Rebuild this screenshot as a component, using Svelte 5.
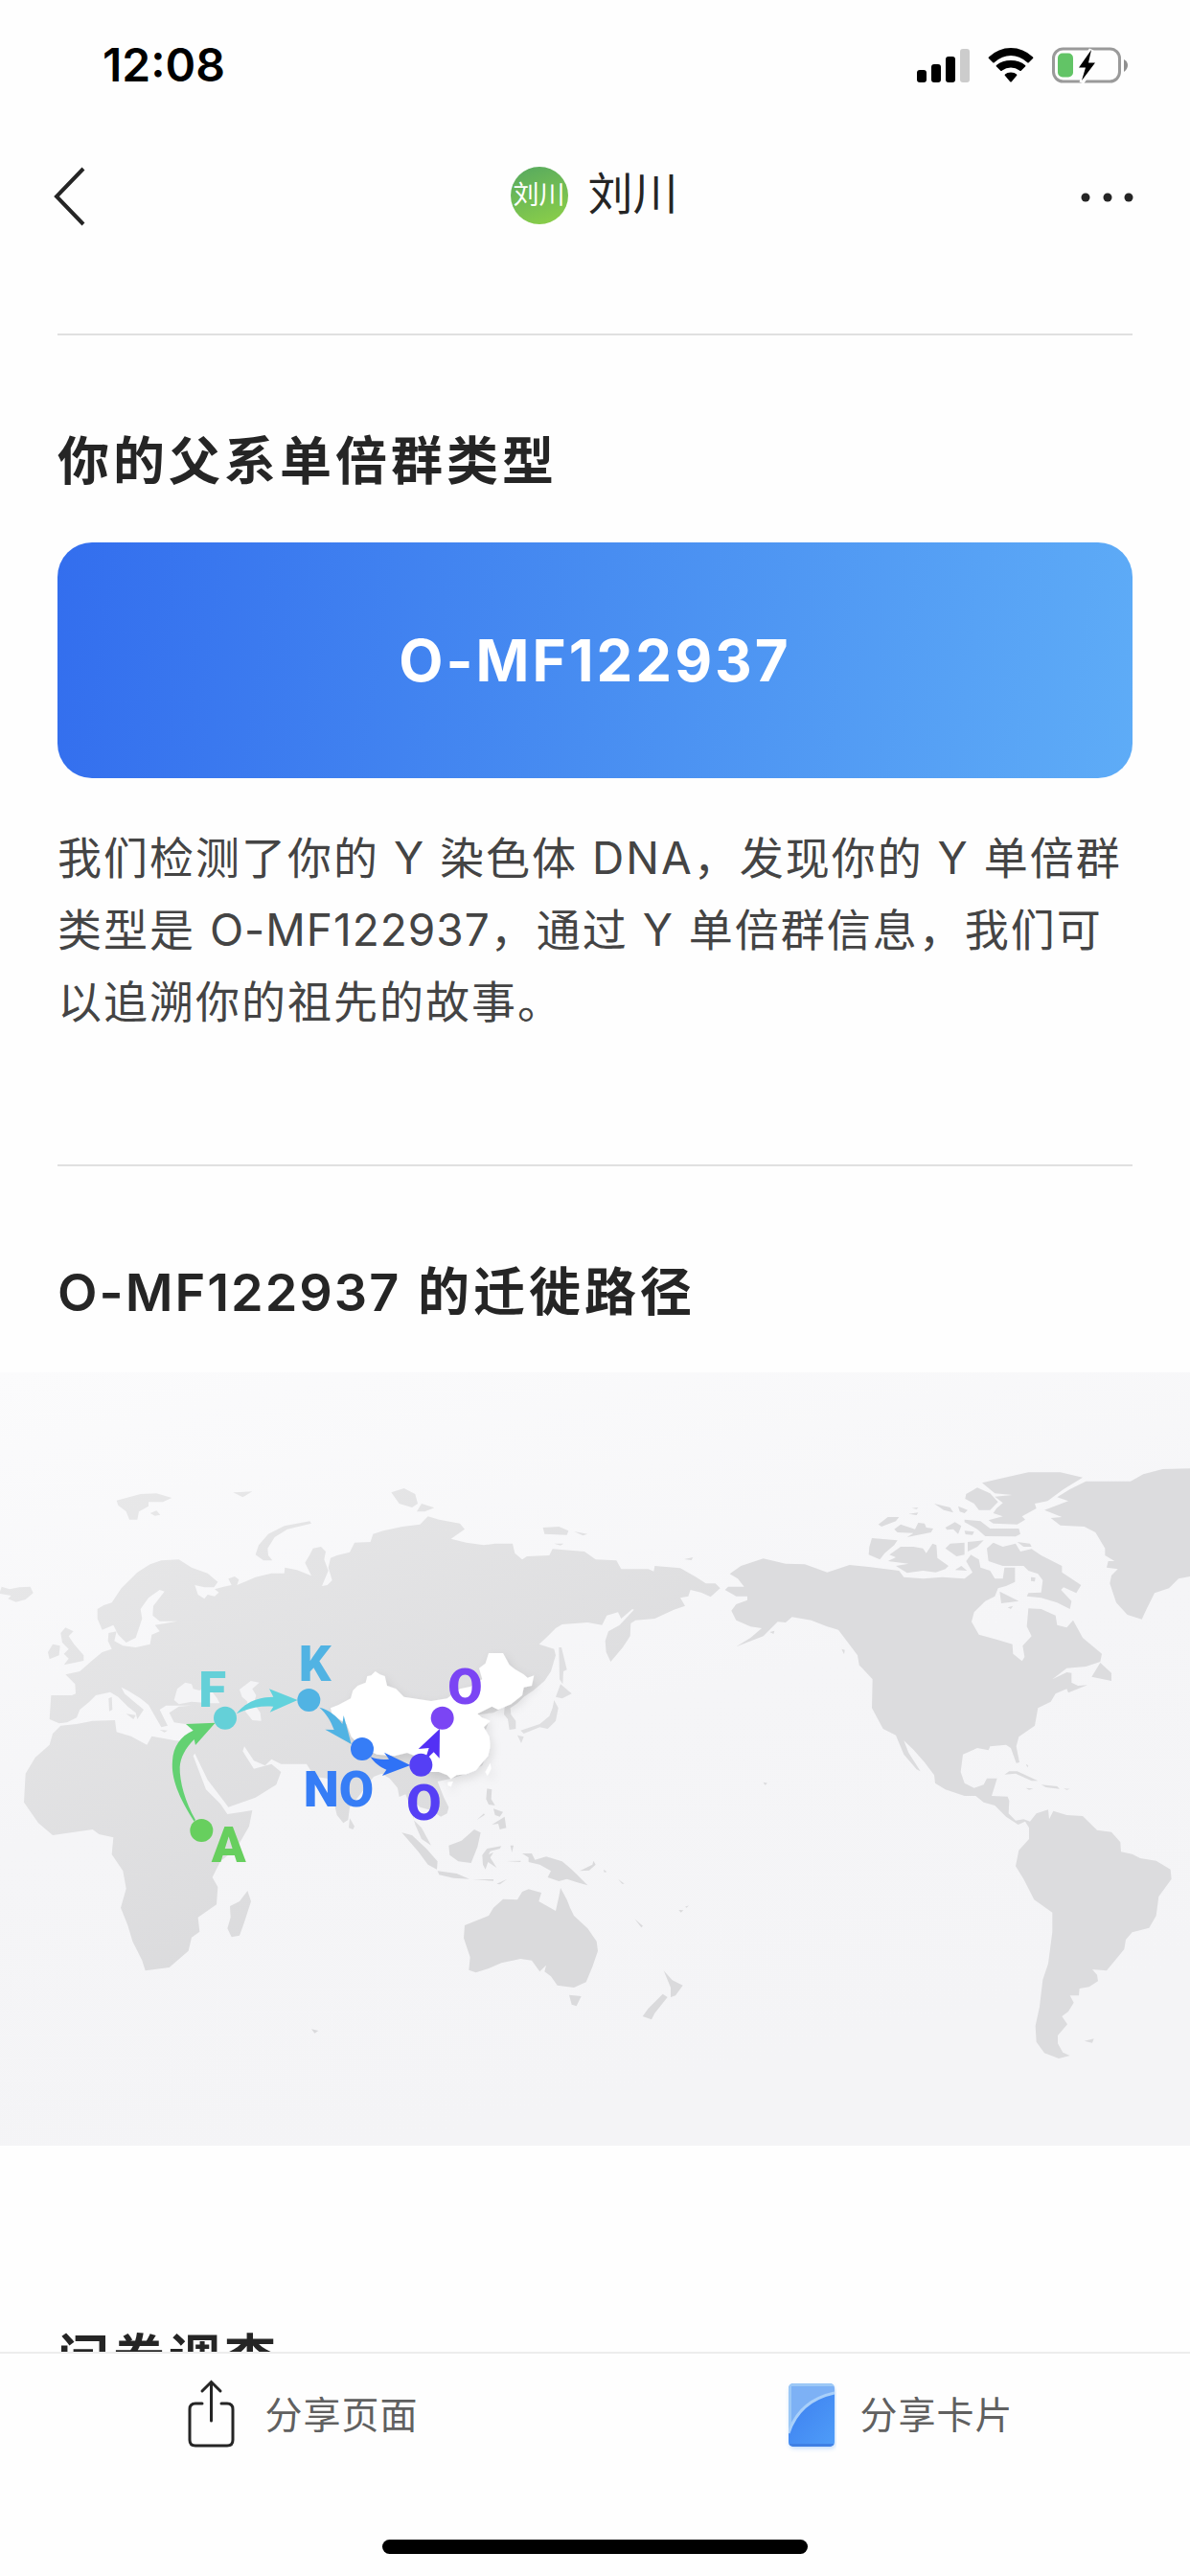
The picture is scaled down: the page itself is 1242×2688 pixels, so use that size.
<script lang="ts">
  const haplogroup = 'O-MF122937';

  const signalBars = [
    { x: 0, y: 22, on: true },
    { x: 15, y: 16, on: true },
    { x: 30, y: 8, on: true },
    { x: 45, y: 0, on: false },
  ];

  const stops = [
    { name: 'A', color: '#67cf5e', cx: 631, cy: 1473, tx: 662, ty: 1573 },
    { name: 'F', color: '#64d0d8', cx: 705, cy: 1121, tx: 622, ty: 1087 },
    { name: 'K', color: '#51b3e3', cx: 967, cy: 1065, tx: 935, ty: 1004 },
    { name: 'NO', color: '#367df6', cx: 1134, cy: 1218, tx: 950, ty: 1398 },
    { name: 'O', color: '#553ff5', cx: 1318, cy: 1268, tx: 1273, ty: 1441 },
    { name: 'O', color: '#7b45f4', cx: 1385, cy: 1121, tx: 1402, ty: 1078 },
  ];

  const arrows = [
    { color: '#63d172', d: 'M608 1445C560 1370 535 1310 540 1255C542 1210 565 1178 605 1160L582 1140L674 1136L612 1206L608 1188C580 1215 565 1245 563 1275C562 1320 580 1385 612 1440Z' },
    { color: '#62d2dc', d: 'M740 1108C770 1070 810 1055 856 1055L843 1030L932 1065L845 1103L856 1085C810 1082 780 1090 740 1108Z' },
    { color: '#51b3e3', d: 'M1000 1088C1030 1095 1055 1115 1072 1140L1076 1113L1100 1203L1018 1157L1046 1158C1036 1130 1020 1105 1000 1088Z' },
    { color: '#2f72f6', d: 'M1160 1243C1180 1250 1195 1252 1218 1250L1203 1229L1285 1269L1197 1302L1210 1283C1190 1275 1170 1260 1160 1243Z' },
    { color: '#5330f5', d: 'M1377 1155L1376 1247L1358 1228L1340 1245L1335 1240L1343 1215L1310 1218Z' },
  ];
</script>

<div class="app">
  <header>
    <div class="status">
      <time>12:08</time>
      <div class="indicators">
        <svg width="55" height="37" viewBox="0 0 55 37" aria-hidden="true">
          {#each signalBars as bar}
            <rect x={bar.x} y={bar.y + 1} width="10" height={35 - bar.y} rx="3" fill={bar.on ? '#000' : '#ccc'} />
          {/each}
        </svg>
        <svg width="48" height="37" viewBox="0 0 48 37" aria-hidden="true">
          <path d="M1 11Q0 10 1 9.500Q11 0 24 0T47 9.500Q48 10 47 11L43 15Q42 16 41 15Q33 8 24 8T7 15Q6 16 5 15Z" />
          <path d="M9 19.500Q8 19 9 18Q15 13 24 13T39 18Q40 19 39 19.500L35 23.500Q34 24.500 33 23.500Q29 20.500 24 20.500T15 23.500Q14 24.500 13 23.500Z" />
          <path d="M18 29Q17 28 18 27.500Q20 25.500 24 25.500T30 27.500Q31 28 30 29L25 35Q24 36 23 35Z" />
        </svg>
        <svg width="80" height="39" viewBox="0 0 80 39" aria-hidden="true">
          <rect x="1.500" y="2" width="69" height="34" rx="10" fill="none" stroke="#9a9a9a" stroke-width="3" />
          <path d="M75 13Q79 15 79 19T75 26Z" fill="#8f8f8f" />
          <rect x="6" y="6.500" width="16" height="25" rx="5" fill="#62c466" />
          <path d="M41 3L28 21.500H35L31 37L45 16.500H38L41 3Z" stroke="#fff" stroke-width="5" />
          <path d="M41 3L28 21.500H35L31 35L45 16.500H38L41 3Z" />
        </svg>
      </div>
    </div>
    <nav>
      <button class="back" aria-label="返回">
        <svg width="34" height="64" viewBox="0 0 34 64" aria-hidden="true">
          <path d="M31 4L3 33L31 62" fill="none" stroke="#252525" stroke-width="4" />
        </svg>
      </button>
      <div class="profile">
        <span class="avatar">刘川</span>
        <span class="name">刘川</span>
      </div>
      <button class="more" aria-label="更多">
        <svg width="56" height="16" viewBox="0 0 56 16" aria-hidden="true">
          <circle cx="5" cy="10" r="4.500" /><circle cx="28" cy="10" r="4.500" /><circle cx="50" cy="10" r="4.500" />
        </svg>
      </button>
    </nav>
  </header>

  <main>
    <section>
      <h2>你的父系单倍群类型</h2>
      <div class="badge">{haplogroup}</div>
      <p>我们检测了你的 Y 染色体 DNA，发现你的 Y 单倍群类型是 <span class="code">{haplogroup}</span>，通过 Y 单倍群信息，我们可以追溯你的祖先的故事。</p>
    </section>
    <section class="route">
      <h2><span class="code">{haplogroup}</span> 的迁徙路径</h2>
    </section>
    <svg class="map" viewBox="0 39 3726 2421" role="img" aria-label="迁徙路径地图">
      <defs>
        <linearGradient id="sea" x1="0" y1="0" x2="0.350" y2="1">
          <stop offset="0" stop-color="#fbfbfc" /><stop offset="0.550" stop-color="#f5f5f7" /><stop offset="1" stop-color="#f4f4f6" />
        </linearGradient>
        <linearGradient id="land" gradientUnits="userSpaceOnUse" x1="300" y1="400" x2="1000" y2="1900">
          <stop offset="0" stop-color="#e8e8e9" /><stop offset="1" stop-color="#dadadc" />
        </linearGradient>
        <filter id="shade" x="-10%" y="-10%" width="125%" height="130%">
          <feDropShadow dx="8" dy="14" stdDeviation="14" flood-color="#000" flood-opacity="0.1" />
        </filter>
      </defs>
      <rect y="39" width="3726" height="2421" fill="url(#sea)" />

      <g fill="url(#land)">
        <path d="M305 780L325 768L350 760L380 715L430 665L470 640L505 628L560 625L600 650L650 668L682 695L670 712L640 712L610 705L620 735L640 748L650 735L672 740L685 728L672 718L700 710L725 705L715 685L735 678L748 688L742 705L800 680L850 668L890 668L892 650L930 658L975 676L955 635L970 610L980 590L1005 585L1020 600L1015 625L1028 660L1008 708L1025 705L1040 690L1028 650L1035 620L1055 612L1095 602L1110 572L1160 570L1168 545L1200 535L1260 522L1315 515L1340 490L1375 500L1440 512L1455 530L1412 560L1460 572L1515 580L1550 575L1605 575L1612 605L1635 625L1650 615L1720 612L1730 592L1830 600L1865 625L1930 628L1945 655L2030 655L2047 662L2050 645L2130 652L2180 680L2210 700L2240 700L2255 715L2225 742L2195 728L2162 720L2155 740L2130 745L2145 770L2110 782L2050 810L1990 815L1975 825L1973 865L1950 900L1912 945L1898 915L1895 880L1905 850L1940 830L1985 782L1980 780L1945 810L1935 790L1900 800L1885 830L1840 822L1760 828L1740 840L1710 870L1688 890L1735 905L1740 925L1725 975L1705 1005L1670 1035L1640 1055L1620 1075L1598 1090L1600 1110L1615 1130L1615 1155L1595 1158L1590 1125L1578 1110L1580 1085L1545 1105L1500 1110L1530 1135L1520 1160L1535 1210L1510 1270L1460 1295L1415 1310L1370 1320L1390 1370L1405 1400L1400 1420L1380 1430L1350 1410L1315 1400L1300 1385L1295 1440L1320 1465L1350 1520L1320 1500L1300 1455L1285 1400L1270 1360L1250 1368L1245 1340L1220 1310L1195 1295L1170 1305L1120 1370L1095 1400L1090 1440L1075 1450L1055 1425L1035 1340L1025 1310L985 1305L960 1265L880 1265L850 1250L830 1270L795 1255L765 1210L760 1225L795 1280L850 1265L880 1290L865 1330L800 1370L715 1400L700 1380L650 1315L610 1232L605 1240L645 1345L690 1390L712 1422L790 1410L780 1460L740 1530L690 1570L665 1620L682 1650L678 1705L620 1745L625 1790L600 1808L590 1850L530 1902L455 1912L445 1880L415 1820L400 1770L378 1715L395 1655L385 1600L350 1548L355 1495L310 1485L290 1470L165 1488L120 1450L75 1385L80 1295L110 1245L155 1205L165 1170L190 1145L240 1140L290 1130L360 1128L365 1165L410 1178L460 1205L475 1178L550 1192L600 1195L622 1160L600 1143L545 1135L530 1105L560 1085L600 1082L520 1082L500 1095L525 1145L505 1150L485 1115L465 1080L440 1060L400 1035L380 1025L390 1045L420 1070L450 1095L440 1110L430 1125L425 1105L400 1085L370 1055L345 1040L300 1050L280 1070L250 1095L240 1120L210 1135L185 1138L155 1125L160 1050L225 1050L237 1045L235 1015L205 985L250 975L290 940L320 915L350 905L338 880L340 855L365 850L358 880L385 895L425 900L470 890L475 860L500 850L485 830L555 818L500 818L478 800L480 770L515 725L500 720L465 745L440 780L445 810L425 870L395 885L370 860L355 830L320 845L305 810Z" />
        <path d="M365 440L440 420L490 418L538 432L510 445L465 445L465 458L435 475L430 500L405 500L395 475L370 455ZM470 480L490 472L502 485L485 488ZM730 415L790 412L760 430ZM800 610L810 580L840 545L890 520L970 505L975 512L900 530L860 555L838 590L840 612L853 628L825 628ZM1225 415L1265 402L1300 420L1308 450L1290 462L1250 450ZM1320 450L1360 463L1330 475L1305 475ZM1700 525L1750 522L1780 535L1775 548L1705 545ZM1797 537L1840 545L1825 550ZM1735 575L1765 575L1755 581ZM2142 624L2170 618L2165 627Z" />
        <path d="M0 725L5 710L30 718L60 712L95 710L104 730L80 750L50 758L25 748L35 738L0 732ZM190 855L205 838L230 850L215 865L232 890L262 925L262 942L200 955L215 935L200 920L215 905L195 885ZM150 915L165 890L188 895L185 925L155 937ZM340 1060L350 1055L352 1095L342 1100ZM395 1108L425 1112L418 1125ZM500 1158L525 1160L515 1166Z" />
        <path d="M720 1710L750 1695L775 1662L786 1695L765 1760L750 1802L725 1807L712 1780L722 1745ZM1095 1435L1110 1460L1105 1470L1092 1465ZM975 2095L997 2100L985 2108Z" />
      </g>
      <g fill="#dfdfe1">
        <path d="M1750 900L1758 900L1775 970L1764 975L1762 1015L1752 1000ZM1755 1015L1790 1045L1760 1060L1740 1055ZM1735 1065L1748 1090L1740 1130L1715 1155L1690 1150L1640 1170L1630 1160L1690 1140L1720 1115L1730 1090ZM1620 1175L1640 1180L1632 1200Z" />
      </g>
      <g fill="#dadadc" transform="translate(1200 1080)">
        <path d="M325 262L340 265L338 295L350 315L330 312L322 295ZM345 325L375 335L365 350L350 345ZM340 375L380 350L385 385L365 390L360 372ZM293 360L315 340L318 344ZM58 400L90 408L135 450L170 490L168 515L140 500L110 460ZM170 520L230 528L270 545L220 542L175 532ZM205 440L245 425L285 390L305 400L295 445L275 495L235 490L208 470ZM310 470L325 450L370 442L365 450L335 458L330 468L345 462L335 478L355 510L328 492L320 515L312 500ZM280 547L345 546L345 551ZM355 560L388 545L365 562ZM398 440L408 440L403 462ZM385 489L430 488L430 492Z" />
        <path d="M435 465L465 465L475 485L510 475L560 490L590 515L610 535L640 565L605 555L575 545L550 552L515 540L525 520L490 500L455 492L455 478ZM615 520L655 500L658 488L665 500L645 518ZM690 515L700 523L692 524ZM735 545L755 560L748 560Z" />
        <path d="M255 690L330 660L345 635L375 608L420 610L435 585L455 577L495 588L487 615L540 645L550 600L555 573L575 610L585 635L597 660L640 700L668 740L672 770L655 820L635 868L597 885L545 878L525 850L505 835L510 815L490 835L465 800L430 795L370 808L330 825L290 838L268 830L272 790L252 730ZM582 908L620 912L605 943L590 938ZM878 832L905 862L938 878L915 910L900 915L900 885ZM875 905L890 915L850 965L840 985L812 975L830 950ZM787 670L813 692L808 697ZM925 642L940 643L932 650ZM945 632L957 628L950 635ZM1190 242L1203 245L1195 251Z" />
      </g>
      <g fill="#dcdcde" transform="translate(2460 180)">
        <path d="M0 458L-70 442L-140 465L-175 490L-150 505L-130 530L-180 530L-190 540L-155 560L-120 560L-120 572L-155 585L-170 605L-155 635L-110 655L-75 660L-110 690L-155 718L-70 685L-25 640L0 642L20 625L80 635L130 655L165 665L225 745L230 775L272 820L270 910L305 975L345 995L370 1055L410 1102L422 1108L385 1050L370 1012L400 1040L435 1080L465 1120L468 1145L500 1165L560 1185L595 1185L620 1205L655 1215L690 1250L728 1275L750 1265L762 1285L762 1320L730 1355L720 1405L745 1445L778 1510L835 1550L835 1610L822 1710L805 1760L795 1845L782 1905L785 1955L810 1990L855 2007L890 1998L868 1988L852 1960L852 1935L882 1900L865 1875L885 1860L902 1832L890 1810L918 1810L920 1788L950 1783L978 1765L975 1745L960 1728L1005 1732L1060 1665L1065 1635L1085 1612L1138 1598L1160 1560L1168 1500L1208 1445L1205 1415L1160 1388L1110 1380L1085 1367L1050 1360L1048 1330L1020 1298L975 1292L930 1248L880 1245L838 1232L825 1258L822 1228L785 1240L765 1265L745 1258L720 1262L698 1240L700 1200L695 1187L645 1185L662 1130L630 1130L620 1150L590 1160L560 1145L548 1110L555 1055L600 1035L635 1042L640 1030L690 1025L705 1035L722 1082L732 1080L722 1030L730 1000L780 965L790 910L830 890L845 865L880 850L885 862L945 838L915 840L895 830L895 800L880 798L835 820L880 785L940 780L985 765L990 740L930 690L900 635L880 658L850 650L845 620L800 600L760 598L755 655L770 685L742 715L748 750L740 763L712 740L710 710L660 695L605 680L582 640L590 610L625 575L655 560L665 535L690 528L718 515L718 470L685 470L680 505L655 505L640 480L610 470L605 445L580 430L565 450L585 485L560 505L490 500L430 505L370 500L355 480L260 468L200 462L130 485L60 460Z" />
        <path d="M810 290L885 262L850 250L890 225L940 200L1080 200L1120 178L1180 162L1266 160L1266 498L1230 505L1200 535L1155 550L1130 600L1115 632L1070 618L1035 580L1015 520L1020 495L1040 475L1005 470L1010 450L1030 450L1000 432L1000 410L970 360L935 342L860 338L830 315L865 312Z" />
        <path d="M615 205L700 185L760 172L860 172L930 188L870 225L820 262L780 270L785 285L740 310L750 320L725 335L650 332L635 322L680 310L650 300L660 285L680 268L655 248L710 243L655 238ZM565 240L600 220L640 238L665 265L640 290L605 290L590 270L562 255ZM560 320L610 325L640 348L730 348L735 365L720 373L625 372L600 350L560 328ZM465 270L515 282L525 298L495 290ZM540 278L570 290L560 300L545 295ZM290 335L320 312L355 312L345 325L300 342ZM340 350L360 335L405 350L415 330L435 332L440 345L462 348L455 360L380 375L400 362L350 360ZM500 345L530 328L550 340L540 365L525 350L505 352ZM385 302L415 298L410 306ZM560 355L590 358L585 368L563 366ZM395 284L415 282L410 287Z" />
        <path d="M270 378L350 385L340 400L310 425L295 445L260 430L262 405ZM325 430L360 405L400 405L430 410L440 425L460 395L472 400L475 440L510 465L500 475L470 485L430 480L380 487L345 465L385 458L320 450L345 438ZM500 410L515 395L560 392L560 430L535 435ZM570 390L620 385L600 405L570 420ZM630 410L650 392L680 405L720 395L735 420L770 412L800 432L865 465L865 485L925 525L910 550L870 532L862 540L895 575L890 600L850 580L800 565L755 560L760 550L800 548L805 510L790 490L760 480L745 465L680 465L635 450ZM725 390L765 395L770 405L745 405ZM670 545L730 575L675 582ZM768 500L782 502L780 514L768 512ZM530 478L550 465L568 480ZM695 595L712 590L705 600Z" />
        <path d="M985 768L1020 800L1020 825L958 812ZM685 1118L700 1108L725 1108L790 1138L770 1138L720 1115ZM800 1150L850 1155L858 1163L815 1158ZM752 1160L775 1162L762 1166ZM870 1162L890 1163L880 1166ZM935 1952L965 1945L960 1958ZM228 773L275 800L283 815L265 805ZM175 725L185 728L183 742ZM-50 672L-35 668L-38 678ZM752 1085L760 1090L757 1096Z" />
      </g>
      <path fill="#f4f4f6" d="M545 1065L555 1030L580 1010L600 1015L605 1030L625 1035L650 1020L680 1060L688 1075L655 1075L600 1070L560 1078ZM750 1032L785 1005L812 1010L790 1030L802 1050L795 1075L815 1105L818 1130L790 1128L768 1100L775 1070L758 1055Z" />

      <g fill="#fff" filter="url(#shade)">
        <path d="M1035 1090L1060 1080L1098 1060L1105 1035L1120 1020L1145 1010L1150 990L1162 988L1175 975L1190 985L1205 990L1212 1020L1240 1030L1265 1055L1350 1068L1400 1060L1440 1030L1475 1022L1510 1000L1500 965L1520 950L1530 918L1575 918L1595 955L1612 968L1640 985L1652 995L1672 988L1665 1020L1640 1025L1635 1050L1600 1078L1560 1095L1540 1085L1495 1108L1510 1120L1535 1130L1515 1150L1532 1180L1535 1210L1528 1240L1490 1285L1460 1297L1430 1300L1412 1312L1400 1300L1375 1290L1340 1290L1320 1255L1300 1240L1275 1230L1235 1240L1180 1235L1130 1210L1100 1180L1085 1140L1040 1110ZM1403 1322L1418 1320L1412 1336L1402 1332ZM1520 1290L1535 1262L1538 1280L1526 1302Z" />
      </g>

      {#each arrows as arrow}
        <path d={arrow.d} fill={arrow.color} />
      {/each}
      {#each stops as stop}
        <circle cx={stop.cx} cy={stop.cy} r="36" fill={stop.color} />
        <text x={stop.tx} y={stop.ty} fill={stop.color}>{stop.name}</text>
      {/each}
    </svg>
    <section class="survey">
      <h2>问卷调查</h2>
    </section>
  </main>

  <footer>
    <div class="actions">
      <button>
        <svg width="68" height="80" viewBox="0 0 68 80" fill="none" stroke="#252525" stroke-width="3" stroke-linecap="round" aria-hidden="true">
          <path d="M27 29H20Q14 29 14 35V67Q14 73 20 73H53Q59 73 59 67V35Q59 29 53 29H47" />
          <path d="M36.500 47V7M27 16L36.500 6.500L46 16" />
        </svg>
        <span>分享页面</span>
      </button>
      <button>
        <svg width="68" height="80" viewBox="0 0 68 80" aria-hidden="true">
          <defs>
            <linearGradient id="card" x1="0" y1="0" x2="1" y2="1">
              <stop offset="0" stop-color="#3d7ff0" /><stop offset="1" stop-color="#4f9df8" />
            </linearGradient>
            <clipPath id="cardShape"><rect x="18" y="8" width="48" height="66" rx="5" /></clipPath>
            <filter id="cardShade" x="-20%" y="-20%" width="150%" height="150%">
              <feDropShadow dx="1" dy="3" stdDeviation="2" flood-color="#4f9df8" flood-opacity="0.350" />
            </filter>
          </defs>
          <rect x="18" y="8" width="48" height="65" rx="5" fill="#7db1f5" filter="url(#cardShade)" />
          <g clip-path="url(#cardShape)">
            <path d="M18 8H66V11H21V74H18Z" fill="#9cc8f6" />
            <path d="M18 60Q29 26 66 18V74H18Z" fill="url(#card)" />
            <path d="M18 60Q29 26 66 18" fill="none" stroke="#a9d0fa" stroke-width="3" />
            <rect x="18" y="71" width="48" height="3" fill="#3f80e4" />
          </g>
        </svg>
        <span>分享卡片</span>
      </button>
    </div>
    <div class="home"></div>
  </footer>
</div>

<style>
  :global(body) {
    margin: 0;
    background: #fdfdfd;
  }
  .app {
    display: flex;
    flex-direction: column;
    height: 100vh;
    background: #fefefe;
    color: #252525;
    font-family: Inter, 'Noto Sans CJK SC', sans-serif;
  }
  button {
    padding: 0;
    border: 0;
    background: none;
    color: inherit;
    font: inherit;
  }
  svg {
    display: block;
    flex: none;
  }
  .status {
    display: flex;
    justify-content: space-between;
    align-items: center;
    height: 132px;
    padding: 4px 64px 0 107px;
    box-sizing: border-box;
    color: #000;
  }
  time {
    font-size: 48px;
    font-weight: 600;
    line-height: 60px;
  }
  .indicators {
    display: flex;
    align-items: center;
    gap: 19px;
  }
  nav {
    display: flex;
    align-items: center;
    height: 144px;
    padding: 0 58px 0 56px;
  }
  .back,
  .more {
    display: flex;
    align-items: center;
    width: 72px;
    height: 72px;
  }
  .more {
    justify-content: flex-end;
    fill: #252525;
  }
  .profile {
    flex: 1;
    display: flex;
    align-items: center;
    justify-content: center;
    gap: 21px;
  }
  .avatar {
    width: 60px;
    border-radius: 50%;
    background: linear-gradient(160deg, #55a860, #8ed147);
    color: #fff;
    font-size: 27px;
    line-height: 60px;
    text-align: center;
  }
  .name {
    padding-bottom: 4px;
    font-size: 47px;
    line-height: 60px;
  }
  main {
    flex: 1;
    min-height: 0;
    padding-top: 72px;
    overflow: hidden auto;
    scrollbar-width: none;
  }
  section {
    margin: 0 60px;
    padding-top: 94px;
    border-top: 2px solid #e0e0e0;
  }
  h2 {
    margin: 0;
    font-size: 54px;
    font-weight: 600;
    line-height: 76px;
    letter-spacing: 4px;
  }
  h2 .code {
    letter-spacing: 2px;
  }
  .badge {
    margin-top: 46px;
    border-radius: 36px;
    background: linear-gradient(98deg, #336eee, #488df1 50%, #5eacf7);
    color: #fff;
    font-size: 60px;
    font-weight: 700;
    line-height: 246px;
    letter-spacing: 3px;
    text-align: center;
  }
  p {
    margin: 46px 0 132px;
    color: #444;
    font-size: 46px;
    line-height: 75px;
    letter-spacing: 2px;
  }
  p .code {
    letter-spacing: 1px;
  }
  .map {
    width: 100%;
    height: auto;
    margin-top: 45px;
  }
  .map text {
    font-family: Roboto, 'Open Sans', sans-serif;
    font-size: 158px;
    font-weight: 900;
  }
  .survey {
    margin-top: 185px;
    padding: 0;
    border: 0;
  }
  footer {
    border-top: 2px solid #ededed;
    background: #fefefe;
  }
  .actions {
    display: flex;
    height: 126px;
  }
  .actions button {
    flex: 1;
    display: flex;
    align-items: center;
    justify-content: center;
    gap: 24px;
    color: #606060;
    font-size: 39px;
    letter-spacing: 1px;
  }
  .actions span {
    padding-bottom: 4px;
  }
  .home {
    width: 444px;
    height: 15px;
    margin: 68px auto 23px;
    border-radius: 8px;
    background: #000;
  }
</style>
